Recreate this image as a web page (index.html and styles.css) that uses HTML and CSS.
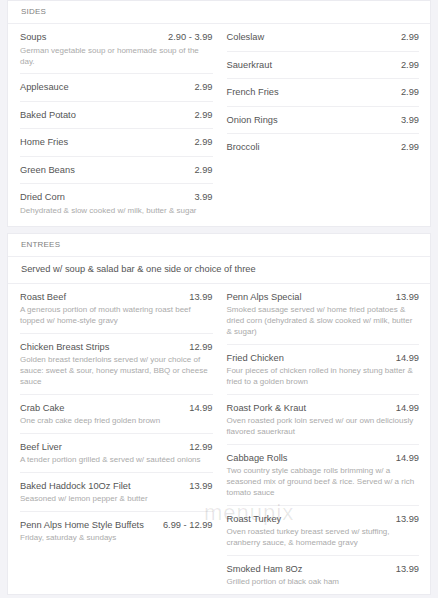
FILE: index.html
```html
<!DOCTYPE html>
<html>
<head>
<meta charset="utf-8">
<link rel="stylesheet" href="styles.css">
</head>
<body>
<div class="page">
  <section class="card sides">
    <div class="card-head">SIDES</div>
    <div class="cols">
      <div class="col">
        <div class="item"><div class="line"><span class="name">Soups</span><span class="price">2.90 - 3.99</span></div><div class="desc">German vegetable soup or homemade soup of the day.</div></div>
        <div class="item"><div class="line"><span class="name">Applesauce</span><span class="price">2.99</span></div></div>
        <div class="item"><div class="line"><span class="name">Baked Potato</span><span class="price">2.99</span></div></div>
        <div class="item"><div class="line"><span class="name">Home Fries</span><span class="price">2.99</span></div></div>
        <div class="item"><div class="line"><span class="name">Green Beans</span><span class="price">2.99</span></div></div>
        <div class="item"><div class="line"><span class="name">Dried Corn</span><span class="price">3.99</span></div><div class="desc">Dehydrated &amp; slow cooked w/ milk, butter &amp; sugar</div></div>
      </div>
      <div class="col">
        <div class="item"><div class="line"><span class="name">Coleslaw</span><span class="price">2.99</span></div></div>
        <div class="item"><div class="line"><span class="name">Sauerkraut</span><span class="price">2.99</span></div></div>
        <div class="item"><div class="line"><span class="name">French Fries</span><span class="price">2.99</span></div></div>
        <div class="item"><div class="line"><span class="name">Onion Rings</span><span class="price">3.99</span></div></div>
        <div class="item"><div class="line"><span class="name">Broccoli</span><span class="price">2.99</span></div></div>
      </div>
    </div>
  </section>

  <section class="card entrees">
    <div class="card-head">ENTREES</div>
    <div class="note">Served w/ soup &amp; salad bar &amp; one side or choice of three</div>
    <div class="cols">
      <div class="col">
        <div class="item"><div class="line"><span class="name">Roast Beef</span><span class="price">13.99</span></div><div class="desc">A generous portion of mouth watering roast beef topped w/ home-style gravy</div></div>
        <div class="item"><div class="line"><span class="name">Chicken Breast Strips</span><span class="price">12.99</span></div><div class="desc">Golden breast tenderloins served w/ your choice of sauce: sweet &amp; sour, honey mustard, BBQ or cheese sauce</div></div>
        <div class="item"><div class="line"><span class="name">Crab Cake</span><span class="price">14.99</span></div><div class="desc">One crab cake deep fried golden brown</div></div>
        <div class="item"><div class="line"><span class="name">Beef Liver</span><span class="price">12.99</span></div><div class="desc">A tender portion grilled &amp; served w/ sautéed onions</div></div>
        <div class="item"><div class="line"><span class="name">Baked Haddock 10Oz Filet</span><span class="price">13.99</span></div><div class="desc">Seasoned w/ lemon pepper &amp; butter</div></div>
        <div class="item"><div class="line"><span class="name">Penn Alps Home Style Buffets</span><span class="price">6.99 - 12.99</span></div><div class="desc">Friday, saturday &amp; sundays</div></div>
      </div>
      <div class="col">
        <div class="item"><div class="line"><span class="name">Penn Alps Special</span><span class="price">13.99</span></div><div class="desc">Smoked sausage served w/ home fried potatoes &amp; dried corn (dehydrated &amp; slow cooked w/ milk, butter &amp; sugar)</div></div>
        <div class="item"><div class="line"><span class="name">Fried Chicken</span><span class="price">14.99</span></div><div class="desc">Four pieces of chicken rolled in honey stung batter &amp; fried to a golden brown</div></div>
        <div class="item"><div class="line"><span class="name">Roast Pork &amp; Kraut</span><span class="price">14.99</span></div><div class="desc">Oven roasted pork loin served w/ our own deliciously flavored sauerkraut</div></div>
        <div class="item"><div class="line"><span class="name">Cabbage Rolls</span><span class="price">14.99</span></div><div class="desc">Two country style cabbage rolls brimming w/ a seasoned mix of ground beef &amp; rice. Served w/ a rich tomato sauce</div></div>
        <div class="item"><div class="line"><span class="name">Roast Turkey</span><span class="price">13.99</span></div><div class="desc">Oven roasted turkey breast served w/ stuffing, cranberry sauce, &amp; homemade gravy</div></div>
        <div class="item"><div class="line"><span class="name">Smoked Ham 8Oz</span><span class="price">13.99</span></div><div class="desc">Grilled portion of black oak ham</div></div>
      </div>
    </div>
    <div class="watermark">menupix</div>
  </section>
</div>
</body>
</html>
```

FILE: styles.css
```css
html, body {
  margin: 0;
  padding: 0;
  background: #f3f3f7;
}
body {
  font-family: "Liberation Sans", Arial, sans-serif;
  color: #555;
}
.page {
  padding: 0 7px;
  display: flex;
  flex-direction: column;
  gap: 6px;
}
.card {
  background: #fff;
  border: 1px solid #ebebf0;
  position: relative;
}
.sides {
  padding-bottom: 4px;
}
.card-head {
  font-size: 8px;
  line-height: 10px;
  padding: 6px 13px 6px;
  color: #808080;
  border-bottom: 1px solid #eeeef2;
  letter-spacing: 0.2px;
}
.note {
  font-size: 9.3px;
  line-height: 13px;
  padding: 6px 13px 6.5px;
  color: #555;
  border-bottom: 1px solid #eeeef2;
}
.cols {
  display: grid;
  grid-template-columns: 1fr 1fr;
  column-gap: 14px;
  padding: 0 11px 0 12px;
  align-items: start;
}
.item {
  padding: 7px 0 6.5px;
  border-bottom: 1px solid #efeff2;
}
.item:last-child {
  border-bottom: none;
}
.line {
  display: flex;
  justify-content: space-between;
  font-size: 9.3px;
  line-height: 13px;
  color: #555;
}
.price {
  white-space: nowrap;
  margin-left: 6px;
}
.desc {
  font-size: 8px;
  line-height: 11px;
  margin-top: 0.5px;
  color: #ababab;
}
.watermark {
  position: absolute;
  left: 196px;
  top: 266px;
  font-size: 22px;
  letter-spacing: 1px;
  color: rgba(0, 0, 0, 0.09);
  font-family: "Liberation Sans", Arial, sans-serif;
  pointer-events: none;
}
```
